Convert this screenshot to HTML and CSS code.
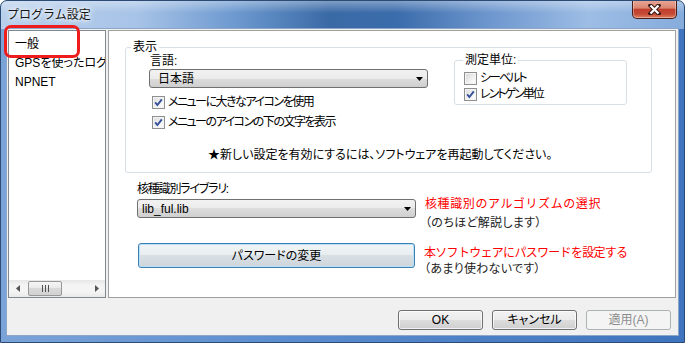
FILE: index.html
```html
<!doctype html>
<html>
<head>
<meta charset="utf-8">
<title>プログラム設定</title>
<link rel="stylesheet" href="styles.css">
</head>

<body>
<div class="window">
	<div class="titlebar">
		<span class="title">プログラム設定</span>
		<div class="close">
			<svg width="13" height="11" viewBox="0 0 13 11"><path d="M2.5 1.5 L10.5 9.5 M10.5 1.5 L2.5 9.5" stroke="#3b1a16" stroke-width="4.2" stroke-linecap="square"/><path d="M2.5 1.5 L10.5 9.5 M10.5 1.5 L2.5 9.5" stroke="#fff" stroke-width="2.2"/></svg>
		</div>
	</div>

	<div class="client">
		<div class="main">
			<div class="list">
				<ul class="items">
					<li>一般</li>
					<li>GPSを使ったログ</li>
					<li>NPNET</li>
				</ul>
				<div class="hscroll">
					<span class="sb-btn"><svg width="4" height="7" viewBox="0 0 4 7"><path d="M4 0 L0 3.5 L4 7 Z" fill="#555"/></svg></span>
					<span class="thumb"><svg width="7" height="7" viewBox="0 0 7 7"><path d="M0.5 0 V7 M3.5 0 V7 M6.5 0 V7" stroke="#4f4f4f" stroke-width="1"/></svg></span>
					<span class="sb-track"></span>
					<span class="sb-btn"><svg width="4" height="7" viewBox="0 0 4 7"><path d="M0 0 L4 3.5 L0 7 Z" fill="#555"/></svg></span>
				</div>
			</div>

			<div class="panel">
				<fieldset class="group">
					<legend>表示</legend>
					<div class="group-top">
						<div class="lang">
							<div class="label">言語:</div>
							<div class="combo lang-combo">
								<span>日本語</span>
								<svg class="arrow" width="7" height="4" viewBox="0 0 7 4"><path d="M0 0 H7 L3.5 4 Z" fill="#000"/></svg>
							</div>
							<div class="check first"><span class="box on"><svg width="11" height="11" viewBox="0 0 11 11"><path d="M2.2 5.4 L4.4 8 L8.8 2.4" fill="none" stroke="#34509a" stroke-width="1.9"/></svg></span><span>メニューに大きなアイコンを使用</span></div>
							<div class="check"><span class="box on"><svg width="11" height="11" viewBox="0 0 11 11"><path d="M2.2 5.4 L4.4 8 L8.8 2.4" fill="none" stroke="#34509a" stroke-width="1.9"/></svg></span><span>メニューのアイコンの下の文字を表示</span></div>
						</div>
						<fieldset class="units">
							<legend>測定単位:</legend>
							<div class="check"><span class="box"></span><span>シーベルト</span></div>
							<div class="check"><span class="box on"><svg width="11" height="11" viewBox="0 0 11 11"><path d="M2.2 5.4 L4.4 8 L8.8 2.4" fill="none" stroke="#34509a" stroke-width="1.9"/></svg></span><span>レントゲン単位</span></div>
						</fieldset>
					</div>
					<p class="note">★新しい設定を有効にするには、ソフトウェアを再起動してください。</p>
				</fieldset>

				<div class="lib">
					<div class="label">核種識別ライブラリ:</div>
					<div class="row row1">
						<div class="combo lib-combo">
							<span>lib_ful.lib</span>
							<svg class="arrow" width="7" height="4" viewBox="0 0 7 4"><path d="M0 0 H7 L3.5 4 Z" fill="#000"/></svg>
						</div>
						<div class="desc">
							<div class="red">核種識別のアルゴリズムの選択</div>
							<div class="gray">（のちほど解説します）</div>
						</div>
					</div>
					<div class="row row2">
						<button class="btn pw">パスワードの変更</button>
						<div class="desc">
							<div class="red">本ソフトウェアにパスワードを設定する</div>
							<div class="gray">（あまり使わないです）</div>
						</div>
					</div>
				</div>
			</div>
		</div>

		<div class="footer">
			<button class="btn">OK</button>
			<button class="btn">キャンセル</button>
			<button class="btn off">適用(A)</button>
		</div>
	</div>

	<div class="marker"></div>
</div>
</body>
</html>
```

FILE: styles.css
```css
* {margin:0; padding:0; box-sizing:border-box;}

body {font:12px/14px "Liberation Sans", "Noto Sans CJK JP", sans-serif; color:#000; background:#fff; font-feature-settings:"palt";}

/* window frame */
.window {position:relative; width:685px; height:343px; display:flex; flex-direction:column; border:1px solid #2b4b74; border-radius:7px 7px 0 0; overflow:hidden;
	background:
		linear-gradient(rgba(255,255,255,.35), rgba(255,255,255,0) 12px) 0 0 / 100% 28px no-repeat,
		linear-gradient(to right, #b8d0ec 0%, #a7c3e7 20%, #6e9ad0 34%, #3a6aa6 48%, #3b6cab 58%, #6f98cf 72%, #9dbde5 86%, #86acdc 100%) 0 0 / 100% 28px no-repeat,
		linear-gradient(to right, #7aa3d8, #5d8ed0 40%, #4c80c6 70%, #3f74bf);}

.titlebar {height:27px; display:flex; align-items:flex-start; flex:none;}
.title {padding:7px 0 0 6px; color:#151515; font-feature-settings:normal; text-shadow:0 0 3px #fff, 0 0 6px #fff, 0 0 9px rgba(255,255,255,.8);}
.close {margin:-1px 7px 0 auto; width:45px; height:19px; border:1px solid #4a1c18; border-top:none; border-radius:0 0 5px 5px; display:flex; align-items:center; justify-content:center;
	background:linear-gradient(#eaa998, #d98571 45%, #c23f2c 52%, #c44a35 78%, #e0805e); box-shadow:inset 0 0 0 1px rgba(255,255,255,.35);}

.client {flex:1; margin:0 5px 6px 5px; background:#f0f0f0; border:1px solid #8ca6c8; display:flex; flex-direction:column;}
.main {display:flex; gap:2px; padding:1px 2px 0 1px;}

/* left list */
.list {width:98px; height:268px; border:1px solid #828790; background:#fff; display:flex; flex-direction:column;}
.items {flex:1; list-style:none; padding:4px 0 0 6px; overflow:hidden; white-space:nowrap;}
.items li {line-height:19px;}
.hscroll {height:17px; display:flex; align-items:center; background:linear-gradient(to bottom, #e6e6e6, #f4f4f4 30%, #f4f4f4 70%, #e9e9e9);}
.sb-btn {width:17px; height:17px; display:flex; align-items:center; justify-content:center;}
.thumb {width:34px; height:15px; margin-left:2px; border:1px solid #979797; border-radius:2px; display:flex; align-items:center; justify-content:center;
	background:linear-gradient(to bottom, #f5f5f5, #e9e9e9 50%, #d9d9d9 50%, #d2d2d2);}
.sb-track {flex:1;}

/* right panel */
.panel {flex:1; height:268px; border:1px solid #a0a0a0; background:#fff;}
.group {margin:9px 0 0 16px; width:527px; border:1px solid #d5dfe5; border-radius:3px; padding:0 0 10px;}
.group > legend {margin-left:5px; padding:0 2px; line-height:14px;}
.group-top {display:flex; padding-left:23px;}
.lang {width:279px;}
.lang .label {padding-left:1px;}

.combo {height:19px; margin-top:1px; border:1px solid #707070; border-radius:3px; display:flex; align-items:center; padding:0 4px 0 8px;
	background:linear-gradient(#f2f2f2, #ebebeb 50%, #dddddd 50%, #cfcfcf);}
.combo .arrow {margin-left:auto;}

.check {display:flex; align-items:center; gap:3px; height:16px; padding-left:3px; margin-top:4px; letter-spacing:-1.5px;}
.check.first {margin-top:6px;}
.box {width:13px; height:13px; border:1px solid #8e8f8f; display:flex; align-items:center; justify-content:center;
	background:linear-gradient(135deg, #d6d6d6, #f6f6f6 70%, #fff); box-shadow:inset 0 0 0 1px #f4f4f4;}
.box.on {background:linear-gradient(135deg, #dcdcdc, #f6f6f6 70%, #fff);}

.units {margin:-1px 0 0 26px; width:173px; border:1px solid #d5dfe5; border-radius:3px; padding:3px 0 2px 8px; align-self:flex-start;}
.units > legend {padding:0 2px; line-height:14px;}
.units .check {padding-left:1px; margin-top:0; letter-spacing:-2px;}

.note {margin:18px 0 0 82px; line-height:14px;}

.lib {padding:8px 0 0 28px;}
.lib .label {line-height:16px; letter-spacing:-1.2px;}
.row {display:flex; align-items:flex-start;}
.row1 {margin-top:-1px;}
.row2 {margin-top:12px;}
.lib-combo {width:279px; margin-top:3px; padding-left:4px;}
.desc {margin-left:9px; line-height:16px;}
.desc .red {color:#f00; font-feature-settings:normal;}
.desc .gray {color:#222; letter-spacing:0.3px;}
.row1 .red {letter-spacing:0.6px;}
.row2 .red {letter-spacing:-0.7px;}
.row1 .gray {margin-top:3px;}
.row2 .desc {margin-top:2px;}

/* buttons */
.btn {font:inherit; line-height:14px; color:#000; width:85px; height:20px; border:1px solid #707070; border-radius:3px;
	background:linear-gradient(#f2f2f2, #ebebeb 50%, #dddddd 50%, #cfcfcf); box-shadow:inset 0 0 0 1px rgba(255,255,255,.7);}
.btn.pw {width:277px; height:25px; margin:0 0 0 1px; border-color:#3c7fb1; box-shadow:inset 0 0 0 1px #b9e2f9;
	background:linear-gradient(#f0f4f7, #e8edf0 50%, #d9e0e5 50%, #cdd5db);}
.btn.off {color:#8d8d8d; border-color:#adb2b5; background:#f4f4f4; box-shadow:none;}

.footer {display:flex; justify-content:flex-end; gap:9px; padding:12px 7px 0 0;}

/* red annotation box */
.marker {position:absolute; left:3px; top:24px; width:76px; height:33px; border:3px solid #ee1c1c; border-radius:7px;}
```
